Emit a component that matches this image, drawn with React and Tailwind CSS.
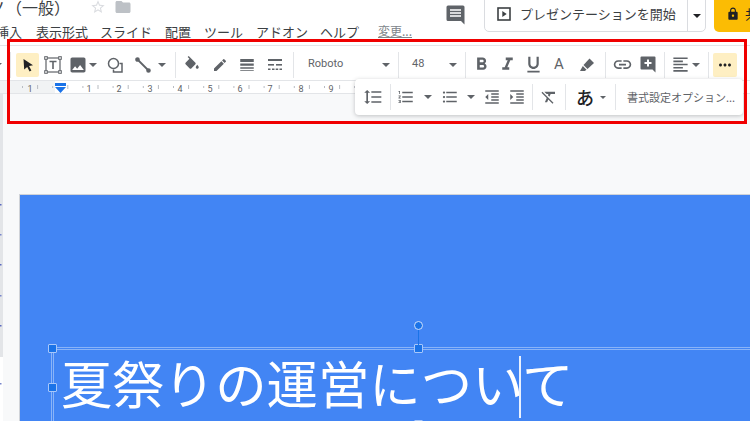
import React from "react";
import {
  MdFormatBold,
  MdFormatItalic,
  MdFormatUnderlined,
  MdLink,
  MdFormatAlignLeft,
  MdMoreHoriz,
  MdFormatLineSpacing,
  MdFormatListNumbered,
  MdFormatListBulleted,
  MdFormatIndentDecrease,
  MdFormatIndentIncrease,
  MdFormatClear,
  MdImage,
  MdEdit,
  MdLock,
  MdStarBorder,
  MdFolder,
  MdLineWeight,
} from "react-icons/md";

const iconGray = "#5f6368";

const Arrow = () => (
  <div className="h-0 w-0 shrink-0 border-x-[4px] border-t-[4px] border-x-transparent border-t-[#5f6368]" />
);

const Sep = () => <div className="h-[26px] w-[1px] shrink-0 bg-[#e3e5e8]" />;

// fixed width cell so icons land on their place in the bar
const Cell = ({ w, children, className = "" }) => (
  <div className={`flex h-[24px] shrink-0 items-center justify-center ${className}`} style={{ width: w }}>
    {children}
  </div>
);

const CursorIcon = () => (
  <svg width="14" height="14" viewBox="0 0 14 14">
    <path d="M2.5 1 L12 7.2 L8 8 L10.4 12.6 L8.6 13.4 L6.2 8.9 L3.2 11.6 Z" fill="#202124" />
  </svg>
);

const TextBoxIcon = () => (
  <svg width="18" height="18" viewBox="0 0 18 18" fill="none" stroke={iconGray}>
    <rect x="2" y="2" width="14" height="14" strokeWidth="1.2" />
    <rect x="0.7" y="0.7" width="2.6" height="2.6" fill="#fff" strokeWidth="1" />
    <rect x="14.7" y="0.7" width="2.6" height="2.6" fill="#fff" strokeWidth="1" />
    <rect x="0.7" y="14.7" width="2.6" height="2.6" fill="#fff" strokeWidth="1" />
    <rect x="14.7" y="14.7" width="2.6" height="2.6" fill="#fff" strokeWidth="1" />
    <path d="M5.5 5.5 H12.5 M9 5.5 V13" strokeWidth="1.6" />
  </svg>
);

const ShapeIcon = () => (
  <svg width="16" height="16" viewBox="0 0 16 16" fill="none" stroke={iconGray} strokeWidth="1.5">
    <circle cx="6.5" cy="6.5" r="5" />
    <path d="M12.5 6.5 H15 V15 H6.5 V12.5" />
  </svg>
);

const LineIcon = () => (
  <svg width="16" height="16" viewBox="0 0 16 16" fill="none" stroke={iconGray} strokeWidth="1.8">
    <path d="M2.5 2.5 L13.5 13.5" />
    <circle cx="2.5" cy="2.5" r="1.4" fill={iconGray} />
    <circle cx="13.5" cy="13.5" r="1.4" fill={iconGray} />
  </svg>
);

const FillIcon = () => (
  <svg width="18" height="18" viewBox="0 0 24 24" fill={iconGray}>
    <path d="M16.56 8.94L7.62 0 6.21 1.41l2.38 2.38-5.15 5.15c-.59.59-.59 1.54 0 2.12l5.5 5.5c.29.29.68.44 1.06.44s.77-.15 1.06-.44l5.5-5.5c.59-.58.59-1.53 0-2.11z" />
    <path d="M19 11.5s-2 2.17-2 3.5c0 1.1.9 2 2 2s2-.9 2-2c0-1.33-2-3.5-2-3.5z" />
  </svg>
);

const DashIcon = () => (
  <svg width="16" height="14" viewBox="0 0 16 14" fill={iconGray}>
    <rect x="1" y="1" width="14" height="2" />
    <rect x="1" y="6" width="6" height="1.6" />
    <rect x="9" y="6" width="6" height="1.6" />
    <rect x="1" y="10.5" width="2.5" height="1.5" />
    <rect x="5" y="10.5" width="2.5" height="1.5" />
    <rect x="8.7" y="10.5" width="2.5" height="1.5" />
    <rect x="12.5" y="10.5" width="2.5" height="1.5" />
  </svg>
);

const HighlightIcon = () => (
  <svg width="16" height="16" viewBox="0 0 16 16" fill={iconGray}>
    <path d="M10.5 1.5 L15 6 L8.5 12 L4.5 8 Z" />
    <path d="M3.8 9 L7.5 12.7 L5.8 14 L1 14 Z" />
  </svg>
);

const AddCommentIcon = () => (
  <svg width="16" height="17" viewBox="0 0 16 17">
    <path d="M1.5 0.5 H14.5 A1 1 0 0 1 15.5 1.5 V16.5 L12.5 13.5 H1.5 A1 1 0 0 1 0.5 12.5 V1.5 A1 1 0 0 1 1.5 0.5 Z" fill={iconGray} />
    <path d="M8 3.5 V10.5 M4.5 7 H11.5" stroke="#fff" strokeWidth="2" />
  </svg>
);

const CommentIcon = () => (
  <svg width="19" height="20" viewBox="0 0 19 20">
    <path d="M2 0.5 H17 A1.5 1.5 0 0 1 18.5 2 V19.5 L15 16 H2 A1.5 1.5 0 0 1 0.5 14.5 V2 A1.5 1.5 0 0 1 2 0.5 Z" fill={iconGray} />
    <path d="M4 5 H15 M4 8 H15 M4 11 H15" stroke="#fff" strokeWidth="1.6" />
  </svg>
);

const PresentIcon = () => (
  <svg width="14" height="14" viewBox="0 0 14 14" className="shrink-0">
    <rect x="1" y="1" width="12" height="12" fill="none" stroke="#3c4043" strokeWidth="1.6" />
    <path d="M5.3 4 L9.7 7 L5.3 10 Z" fill="#3c4043" />
  </svg>
);

const rulerNumbers = [
  { n: 1, x: 30 },
  { n: 1, x: 89 },
  { n: 2, x: 119 },
  { n: 3, x: 150 },
  { n: 4, x: 180 },
  { n: 5, x: 210 },
  { n: 6, x: 240 },
  { n: 7, x: 270 },
  { n: 8, x: 301 },
  { n: 9, x: 331 },
];

const Ruler = () => (
  <svg width="750" height="12" viewBox="0 0 750 12" className="block">
    <rect x="0" y="0" width="55" height="12" fill="#f1f3f4" />
    {Array.from({ length: 26 }).map((_, i) => {
      const x = 22 + i * 15.1;
      const major = i % 2 === 1;
      return <rect key={i} x={x} y={major ? 4 : 5} width="1" height={major ? 4 : 2} fill="#b8bcc2" />;
    })}
    {rulerNumbers.map((r, i) => (
      <text key={i} x={r.x} y="10.5" textAnchor="middle" fontSize="9" fontFamily="Roboto, sans-serif" fill="#5f6368">
        {r.n}
      </text>
    ))}
    <rect x="55" y="2" width="11" height="3" fill="#1a73e8" />
    <path d="M55 6 H66 L60.5 12 Z" fill="#1a73e8" />
  </svg>
);

// page marks on the left edge, cut off by the window
const Gutter = () => (
  <svg width="3" height="327" viewBox="0 0 3 327" className="block shrink-0">
    <rect width="3" height="263" fill="#e3e5e8" />
    <rect y="263" width="3" height="64" fill="#fff" />
    {[110, 140, 170, 201, 231, 289].map((y, i) => (
      <rect key={y} x="0" y={y} width="1.5" height="1.5" fill={i % 2 ? "#7986cb" : "#5c6bc0"} />
    ))}
  </svg>
);

const Handle = ({ className }) => (
  <div className={`absolute h-[9px] w-[9px] rounded-[1px] border border-[#a8c7fa] bg-[#1a73e8] ${className}`} />
);

const menuItems = [
  ["表示形式", "w-[64px]"],
  ["スライド", "w-[65px]"],
  ["配置", "w-[39px]"],
  ["ツール", "w-[52px]"],
  ["アドオン", "w-[64px]"],
  ["ヘルプ", "w-[58px]"],
];

export default function App() {
  return (
    <div
      className="relative flex h-[421px] w-[750px] flex-col overflow-hidden bg-white"
      style={{ fontFamily: '"Noto Sans CJK JP", "Noto Sans", sans-serif' }}
    >
      {/* Title row */}
      <div className="flex h-[24px] shrink-0 items-start">
        <span className="-ml-[10px] w-[94px] shrink-0 text-[16px] leading-[14px] whitespace-nowrap text-[#3c4043]">
          ノ（一般）
        </span>
        <MdStarBorder className="-mt-[1px] ml-[6px] shrink-0 text-[#dadce0]" size={16} />
        <MdFolder className="-mt-[2px] ml-[8px] shrink-0 text-[#bdc1c6]" size={18} />
        <div className="mt-[5px] ml-[314px] shrink-0">
          <CommentIcon />
        </div>
        <div className="-mt-[1px] ml-[19px] flex h-[33px] w-[222px] shrink-0 items-center rounded-b-[5px] border border-[#dadce0]">
          <div className="flex h-full w-[203px] shrink-0 items-center gap-[9px] border-r border-[#dadce0] pb-[3px] pl-[12px] text-[13px] whitespace-nowrap text-[#3c4043]">
            <PresentIcon />
            プレゼンテーションを開始
          </div>
          <div className="flex flex-1 justify-center">
            <div className="h-0 w-0 border-x-[4px] border-t-[4px] border-x-transparent border-t-[#202124]" />
          </div>
        </div>
        <div className="-mt-[1px] ml-[8px] flex h-[33px] w-[60px] shrink-0 items-center gap-[5px] rounded-bl-[5px] bg-[#fbbc04] pb-[3px] pl-[12px] text-[13px] whitespace-nowrap text-[#202124]">
          <MdLock size={14} className="shrink-0" />
          共有
        </div>
      </div>

      {/* Menu row */}
      <div className="-mt-[2px] mb-[3px] flex h-[20px] shrink-0 items-center text-[13px] whitespace-nowrap text-[#3c4043]">
        <span className="-ml-[4px] w-[40px] shrink-0">挿入</span>
        {menuItems.map(([label, w]) => (
          <span key={label} className={`${w} shrink-0`}>
            {label}
          </span>
        ))}
        <span className="-mt-[2px] text-[12px] text-[#80868b] underline">変更...</span>
      </div>

      {/* Toolbar */}
      <div className="flex h-[35px] shrink-0 items-center border-t border-[#e3e5e8] bg-white pt-[3px] text-[#5f6368]">
        <div className="flex w-[10px] shrink-0 items-center">
          <div className="-ml-[6px]">
            <Arrow />
          </div>
        </div>
        <Sep />
        <Cell w={5} />
        <Cell w={23} className="rounded-[2px] bg-[#feefc3]">
          <CursorIcon />
        </Cell>
        <Cell w={28}>
          <TextBoxIcon />
        </Cell>
        <Cell w={21}>
          <MdImage size={20} />
        </Cell>
        <Cell w={10}>
          <Arrow />
        </Cell>
        <Cell w={34}>
          <ShapeIcon />
        </Cell>
        <Cell w={22}>
          <LineIcon />
        </Cell>
        <Cell w={16}>
          <Arrow />
        </Cell>
        <Cell w={5} />
        <Sep />
        <Cell w={5} />
        <Cell w={22}>
          <FillIcon />
        </Cell>
        <Cell w={34}>
          <MdEdit size={16} />
        </Cell>
        <Cell w={20}>
          <MdLineWeight size={18} />
        </Cell>
        <Cell w={36}>
          <DashIcon />
        </Cell>
        <Sep />
        <div className="flex h-[24px] w-[104px] shrink-0 items-center justify-between pr-[8px] pl-[14px] text-[11px]" style={{ fontFamily: "Roboto, sans-serif" }}>
          Roboto
          <Arrow />
        </div>
        <Sep />
        <div className="flex h-[24px] w-[66px] shrink-0 items-center justify-between pr-[8px] pl-[13px] text-[11px]" style={{ fontFamily: "Roboto, sans-serif" }}>
          48
          <Arrow />
        </div>
        <Sep />
        <Cell w={3} />
        <Cell w={24}>
          <MdFormatBold size={21} />
        </Cell>
        <Cell w={28}>
          <MdFormatItalic size={21} />
        </Cell>
        <Cell w={24}>
          <MdFormatUnderlined size={21} />
        </Cell>
        <Cell w={28}>
          <span className="text-[15px]" style={{ fontFamily: "Roboto, sans-serif" }}>
            A
          </span>
        </Cell>
        <Cell w={28}>
          <HighlightIcon />
        </Cell>
        <Cell w={4} />
        <Sep />
        <Cell w={4} />
        <Cell w={24}>
          <MdLink size={21} />
        </Cell>
        <Cell w={28}>
          <AddCommentIcon />
        </Cell>
        <Cell w={2} />
        <Sep />
        <Cell w={5} />
        <Cell w={20}>
          <MdFormatAlignLeft size={19} />
        </Cell>
        <Cell w={12}>
          <Arrow />
        </Cell>
        <Cell w={6} />
        <Sep />
        <Cell w={4} />
        <Cell w={24} className="rounded-[2px] bg-[#feefc3] text-[#202124]">
          <MdMoreHoriz size={18} />
        </Cell>
      </div>

      {/* Ruler */}
      <div className="h-[14px] shrink-0 border-y border-[#e3e5e8] bg-white">
        <Ruler />
      </div>

      {/* Canvas */}
      <div className="flex min-h-0 flex-1 bg-[#f8f9fa]">
        <Gutter />
        <div className="mt-[100px] ml-[16px] flex-1 border-t border-l border-[#d0d3d8] bg-[#4285f4]">
          {/* Selected text box */}
          <div className="relative mt-[152px] ml-[31px] h-[80px] border-t-[3px] border-l-[3px] border-double border-[#8ab4f8]">
            <Handle className="-top-[6px] -left-[6px]" />
            <Handle className="top-[33px] -left-[6px]" />
            <Handle className="-top-[6px] left-[360px]" />
            <Handle className="top-[70px] left-[360px]" />
            <div className="absolute -top-[24px] left-[364px] h-[20px] w-[1px] bg-[#1a73e8]" />
            <div className="absolute -top-[29px] left-[360px] h-[9px] w-[9px] rounded-full border border-[#cfe0fc] bg-[#1a73e8]" />
            <div className="absolute top-[6px] left-[465px] h-[62px] w-[2px] bg-[#e8f0fe]" />
            <div className="pl-[7px] text-[51.4px] leading-[64px] whitespace-nowrap text-white">
              夏祭りの運営について
            </div>
          </div>
        </div>
      </div>

      {/* Floating second row of the toolbar */}
      <div className="absolute top-[79px] left-[355px] flex h-[36px] w-[388px] items-center rounded-[4px] bg-white text-[#5f6368] shadow-[0_1px_4px_rgba(60,64,67,0.3)]">
        <Cell w={35}>
          <MdFormatLineSpacing size={20} />
        </Cell>
        <Sep />
        <Cell w={4} />
        <Cell w={22}>
          <MdFormatListNumbered size={18} />
        </Cell>
        <Cell w={22}>
          <Arrow />
        </Cell>
        <Cell w={22}>
          <MdFormatListBulleted size={18} />
        </Cell>
        <Cell w={20}>
          <Arrow />
        </Cell>
        <Cell w={22}>
          <MdFormatIndentDecrease size={18} />
        </Cell>
        <Cell w={27}>
          <MdFormatIndentIncrease size={18} />
        </Cell>
        <Cell w={2} />
        <Sep />
        <Cell w={32}>
          <MdFormatClear size={18} />
        </Cell>
        <Sep />
        <Cell w={34} className="pl-[4px]">
          <span className="text-[18px] font-medium text-[#202124]">あ</span>
        </Cell>
        <Cell w={6}>
          <div className="h-0 w-0 shrink-0 border-x-[3px] border-t-[3px] border-x-transparent border-t-[#5f6368]" />
        </Cell>
        <Cell w={9} />
        <Sep />
        <span className="pl-[11px] text-[11px] whitespace-nowrap">書式設定オプション...</span>
      </div>

      {/* Red annotation frame */}
      <div className="pointer-events-none absolute top-[39px] left-[7px] h-[85px] w-[740px] border-[3px] border-[#f00000]" />
    </div>
  );
}
